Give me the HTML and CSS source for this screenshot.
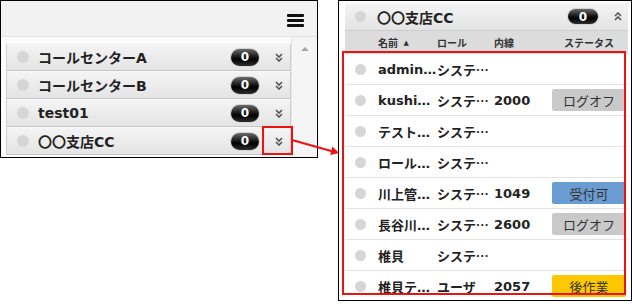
FILE: index.html
```html
<!DOCTYPE html>
<html lang="ja">
<head>
  <meta charset="UTF-8" />
  <title>グループ一覧</title>
  <link rel="stylesheet" href="styles.css">
</head>
<body>
  <div class="stage">

    <section class="group-panel">
      <div class="toolbar">
        <span class="menu-icon"><i></i><i></i><i></i></span>
      </div>
      <div class="group-body">
        <ul class="group-list">
          <li class="group-row">
            <span class="dot"></span>
            <span class="group-name">コールセンターA</span>
            <span class="count">0</span>
            <span class="expand"><svg width="8" height="9" viewBox="0 0 8 9"><polyline points="1,1 4,4 7,1"/><polyline points="1,5 4,8 7,5"/></svg></span>
          </li>
          <li class="group-row">
            <span class="dot"></span>
            <span class="group-name">コールセンターB</span>
            <span class="count">0</span>
            <span class="expand"><svg width="8" height="9" viewBox="0 0 8 9"><polyline points="1,1 4,4 7,1"/><polyline points="1,5 4,8 7,5"/></svg></span>
          </li>
          <li class="group-row">
            <span class="dot"></span>
            <span class="group-name">test01</span>
            <span class="count">0</span>
            <span class="expand"><svg width="8" height="9" viewBox="0 0 8 9"><polyline points="1,1 4,4 7,1"/><polyline points="1,5 4,8 7,5"/></svg></span>
          </li>
          <li class="group-row">
            <span class="dot"></span>
            <span class="group-name">〇〇支店CC</span>
            <span class="count">0</span>
            <span class="expand"><svg width="8" height="9" viewBox="0 0 8 9"><polyline points="1,1 4,4 7,1"/><polyline points="1,5 4,8 7,5"/></svg></span>
          </li>
        </ul>
        <div class="scroll-rail"><span class="scroll-up"></span></div>
      </div>
    </section>

    <section class="member-panel">
      <div class="member-head">
        <span class="dot"></span>
        <span class="group-name">〇〇支店CC</span>
        <span class="count">0</span>
        <span class="expand"><svg width="8" height="9" viewBox="0 0 8 9"><polyline points="1,4 4,1 7,4"/><polyline points="1,8 4,5 7,8"/></svg></span>
      </div>
      <div class="col-head">
        <span class="m-name">名前 <small>▲</small></span>
        <span class="m-role">ロール</span>
        <span class="m-ext">内線</span>
        <span class="m-status">ステータス</span>
      </div>
      <div class="member-list">
        <div class="member-row">
          <span class="dot"></span>
          <span class="m-name">administrator</span>
          <span class="m-role">システム管理者</span>
          <span class="m-ext"></span>
        </div>
        <div class="member-row">
          <span class="dot"></span>
          <span class="m-name">kushimoto</span>
          <span class="m-role">システム管理者</span>
          <span class="m-ext">2000</span>
          <span class="m-status logoff">ログオフ</span>
        </div>
        <div class="member-row">
          <span class="dot"></span>
          <span class="m-name">テストユーザ</span>
          <span class="m-role">システム管理者</span>
          <span class="m-ext"></span>
        </div>
        <div class="member-row">
          <span class="dot"></span>
          <span class="m-name">ロール確認</span>
          <span class="m-role">システム管理者</span>
          <span class="m-ext"></span>
        </div>
        <div class="member-row">
          <span class="dot"></span>
          <span class="m-name">川上管理者</span>
          <span class="m-role">システム管理者</span>
          <span class="m-ext">1049</span>
          <span class="m-status ready">受付可</span>
        </div>
        <div class="member-row">
          <span class="dot"></span>
          <span class="m-name">長谷川太郎</span>
          <span class="m-role">システム管理者</span>
          <span class="m-ext">2600</span>
          <span class="m-status logoff">ログオフ</span>
        </div>
        <div class="member-row">
          <span class="dot"></span>
          <span class="m-name">椎貝</span>
          <span class="m-role">システム管理者</span>
          <span class="m-ext"></span>
        </div>
        <div class="member-row">
          <span class="dot"></span>
          <span class="m-name">椎貝テスト</span>
          <span class="m-role">ユーザ</span>
          <span class="m-ext">2057</span>
          <span class="m-status after">後作業</span>
        </div>
      </div>
    </section>

    <!-- annotation overlay -->
    <svg class="callout" width="632" height="304" viewBox="0 0 632 304">
      <rect x="263" y="127" width="29" height="27" />
      <rect x="343" y="52" width="282" height="242" />
      <line x1="292" y1="140" x2="333" y2="151.5" />
      <polygon points="339,153 330.2,155 332.4,146.6" />
    </svg>

  </div>
</body>
</html>
```

FILE: styles.css
```css
body {
  margin: 0;
  background: #fff;
  font-family: "DejaVu Sans", "Noto Sans CJK JP", sans-serif;
  color: #222;
}

.stage {
  position: relative;
  width: 632px;
  height: 304px;
  display: flex;
  align-items: flex-start;
  gap: 20px;
}

.dot {
  flex: none;
  border-radius: 50%;
  background: #d6d6d6;
}

.count {
  flex: none;
  display: flex;
  align-items: center;
  justify-content: center;
  border-radius: 9px;
  background: linear-gradient(to bottom, #6a6a6a 0%, #1a1a1a 45%, #000 60%, #2e2e2e 100%);
  box-shadow: 0 0 0 1px #d4d4d4;
  color: #fff;
  font-size: 12px;
  font-weight: bold;
}

.expand {
  flex: none;
  display: flex;
  align-items: center;
  justify-content: center;
}

.expand svg polyline {
  fill: none;
  stroke: #555;
  stroke-width: 1.6;
}

/* left: group list */

.group-panel {
  width: 318px;
  height: 158px;
  box-sizing: border-box;
  border: 1px solid #000;
  display: flex;
  flex-direction: column;
}

.toolbar {
  height: 36px;
  box-sizing: border-box;
  background: #f2f2f2;
  border-bottom: 1px solid #e3e3e3;
  display: flex;
  justify-content: flex-end;
  align-items: flex-start;
  padding: 13px 13px 0 0;
}

.menu-icon {
  display: flex;
  flex-direction: column;
  gap: 2px;
  width: 17px;
}

.menu-icon i {
  height: 3px;
  background: #111;
  border-radius: 1px;
}

.group-body {
  flex: 1;
  display: flex;
  background: #fbfbfb;
}

.group-list {
  list-style: none;
  margin: 0;
  padding: 6px 0 0 5px;
  width: 285px;
}

.group-row {
  height: 28px;
  box-sizing: border-box;
  display: flex;
  align-items: center;
  padding-left: 10px;
  background: linear-gradient(to bottom, #f4f4f4, #e4e4e4);
  border: 1px solid #d0d0d0;
  border-top-color: #f8f8f8;
  border-bottom-color: #c6c6c6;
}

.group-row .dot {
  width: 12px;
  height: 12px;
  margin-right: 9px;
}

.group-name {
  flex: 1;
  font-size: 14px;
  font-weight: bold;
  white-space: nowrap;
}

.group-row .count {
  width: 28px;
  height: 17px;
}

.group-row .expand {
  width: 23px;
  height: 20px;
  margin-left: 8px;
}

.scroll-rail {
  flex: 1;
  display: flex;
  justify-content: center;
  padding-top: 10px;
  background: #f5f5f5;
  border-left: 1px solid #e6e6e6;
}

.scroll-up {
  width: 0;
  height: 0;
  border-left: 4px solid transparent;
  border-right: 4px solid transparent;
  border-bottom: 4px solid #a8a8a8;
}

/* right: member list */

.member-panel {
  width: 294px;
  height: 301px;
  box-sizing: border-box;
  border: 1px solid #000;
  padding: 2px 3px 0 6px;
  overflow: hidden;
  display: flex;
  flex-direction: column;
}

.member-head {
  height: 28px;
  flex: none;
  box-sizing: border-box;
  display: flex;
  align-items: center;
  padding-left: 10px;
  background: linear-gradient(to bottom, #f4f4f4, #e3e3e3);
  border-bottom: 1px solid #cdcdcd;
}

.member-head .dot {
  width: 11px;
  height: 11px;
  margin-right: 11px;
}

.member-head .count {
  width: 30px;
  height: 15px;
}

.member-head .expand {
  width: 20px;
  height: 20px;
  margin-left: 10px;
}

.col-head {
  height: 23px;
  flex: none;
  display: flex;
  align-items: center;
  padding-left: 33px;
  background: #dcdcdc;
  font-size: 10px;
  font-weight: bold;
  color: #333;
}

.col-head small {
  font-size: 7px;
  margin-left: 2px;
  vertical-align: 2px;
}

.col-head .m-status {
  text-align: center;
}

.member-row {
  height: 31px;
  flex: none;
  box-sizing: border-box;
  display: flex;
  align-items: center;
  padding-left: 10px;
  background: #fff;
  border-bottom: 1px solid #e4e4e4;
  font-size: 13px;
  font-weight: bold;
}

.member-row .dot {
  width: 11px;
  height: 11px;
  margin-right: 12px;
}

.m-name,
.m-role,
.m-ext {
  flex: none;
  white-space: nowrap;
  overflow: hidden;
  text-overflow: ellipsis;
}

.m-name { width: 59px; }
.m-role { width: 57px; font-family: "Noto Sans CJK JP", sans-serif; }
.m-ext { width: 58px; }

.m-status {
  flex: none;
  width: 74px;
}

.member-row .m-status {
  height: 22px;
  display: flex;
  align-items: center;
  justify-content: center;
  border-radius: 2px;
  font-family: "Noto Sans CJK JP", sans-serif;
  font-weight: normal;
  font-size: 13px;
  color: #333;
}

.logoff { background: #c9c9c9; }
.ready { background: #6a9bd1; }
.after { background: #fdc800; }

.callout {
  position: absolute;
  left: 0;
  top: 0;
  pointer-events: none;
}

.callout rect {
  fill: none;
  stroke: #ee1111;
  stroke-width: 2;
}

.callout line {
  stroke: #ee1111;
  stroke-width: 2;
}

.callout polygon {
  fill: #ee1111;
}
```
